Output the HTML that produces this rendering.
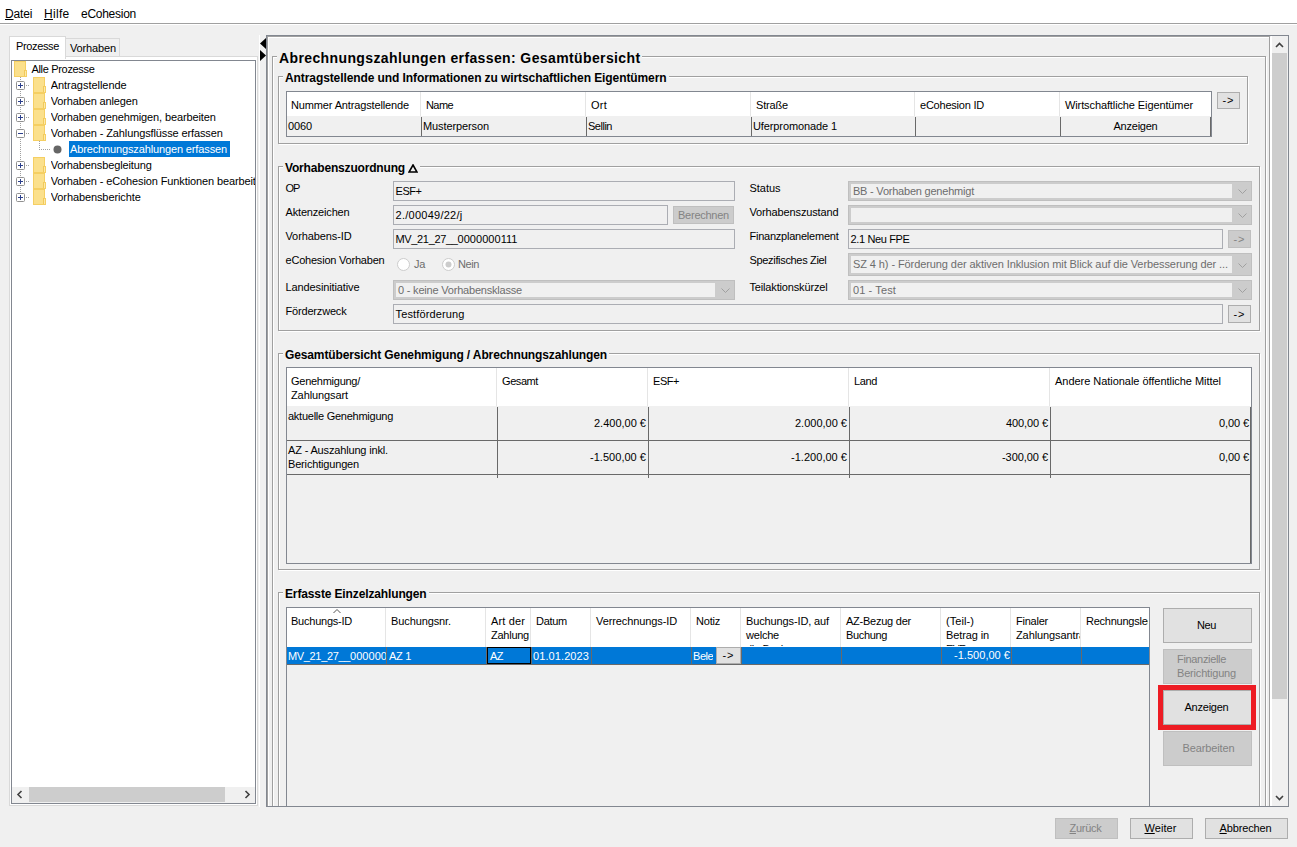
<!DOCTYPE html><html><head><meta charset="utf-8"><title>eCohesion</title><style>
*{box-sizing:border-box;margin:0;padding:0}
html,body{width:1297px;height:847px;overflow:hidden;background:#f0f0f0}
body{position:relative;font-family:"Liberation Sans",sans-serif;font-size:11px;color:#000}
.a{position:absolute;white-space:nowrap}
.t{position:absolute;white-space:nowrap;line-height:13px;height:13px}
.g{color:#6d6d6d}
.b12{font-weight:bold;font-size:12px;line-height:14px;height:14px;background:#f0f0f0;padding:0 2px}
.grp{position:absolute;border:1px solid #a0a0a0;box-shadow:1px 1px 0 #fff, inset 1px 1px 0 #fff}
.tf{position:absolute;border:1px solid #abadb3;background:#f0f0f0;height:20px;line-height:18px;padding-left:1.5px;white-space:nowrap;overflow:hidden}
.cb{position:absolute;border:1px solid #bfbfbf;box-shadow:inset 0 0 0 2px #cccccc;background:#f0f0f0;height:20px;line-height:18px;padding-left:4px;color:#6d6d6d;white-space:nowrap;overflow:hidden}
.cb i{position:absolute;right:1px;top:1px;bottom:1px;width:18px;background:#cccccc}
.cb svg{position:absolute;right:4px;top:50%;margin-top:-2px}
.btn{position:absolute;border:1px solid #adadad;background:#e1e1e1;text-align:center;white-space:nowrap}
.btn.d{background:#cccccc;border-color:#bfbfbf;color:#838383}
.fold{position:absolute;width:14px;height:16px}
.dv{width:1px;background:repeating-linear-gradient(to bottom,#a0a0a0 0 1px,transparent 1px 2px)}
.dh{height:1px;background:repeating-linear-gradient(to right,#a0a0a0 0 1px,transparent 1px 2px)}
.vl{position:absolute;width:1px;background:#696969}
.hl{position:absolute;height:1px;background:#696969}
.hv{position:absolute;width:1px;background:#e5e5e5}
</style></head><body>
<div class="a" style="left:0;top:0;width:1297px;height:23px;background:#fff"></div>
<div class="a" style="left:0;top:23px;width:1297px;height:1px;background:#a0a0a0"></div>
<div class="a" style="left:0;top:24px;width:1297px;height:1px;background:#fff"></div>
<div class="a" style="left:5px;top:7px;font-size:12px;line-height:15px;letter-spacing:-0.17px"><u>D</u>atei</div>
<div class="a" style="left:44px;top:7px;font-size:12px;line-height:15px;letter-spacing:0.3px"><u>H</u>ilfe</div>
<div class="a" style="left:81px;top:7px;font-size:12px;line-height:15px;letter-spacing:-0.27px">eCohesion</div>
<div class="a" style="left:65px;top:38px;width:55px;height:19px;background:#f0f0f0;border:1px solid #d9d9d9"></div>
<div class="a" style="left:9px;top:56px;width:249px;height:750px;border:1px solid #d9d9d9;background:#fff"></div>
<div class="a" style="left:9px;top:36px;width:57px;height:23px;background:#fff;border:1px solid #d9d9d9;border-bottom:none"></div>
<div class="t" style="left:16px;top:40px"><span style="letter-spacing:-0.357px">Prozesse</span></div>
<div class="t" style="left:70px;top:42px"><span style="letter-spacing:-0.139px">Vorhaben</span></div>
<div class="a" style="left:11px;top:60px;width:245px;height:744px;border:1px solid #828790;background:#fff"></div>
<div class="a dv" style="left:20px;top:77px;height:117px"></div>
<svg class="fold" style="left:14px;top:61px" viewBox="0 0 14 16"><path d="M0 0h12v9h1v7H0z" fill="#f5cf63"/><path d="M1 1h10v14H1z" fill="#fbe08c"/><path d="M11 10h1v5h-1z" fill="#fce9a8"/><path d="M10 9h1v6h-1z" fill="#f2c95a"/></svg>
<div class="t" style="left:31.5px;top:63px"><span style="letter-spacing:-0.328px">Alle Prozesse</span></div>
<div class="a dh" style="left:26px;top:85px;width:3px"></div>
<svg class="a" style="left:16px;top:81px" width="9" height="9" viewBox="0 0 9 9"><rect x="0.5" y="0.5" width="8" height="8" rx="1" fill="#fff" stroke="#919191"/><path d="M2 4.5h5M4.5 2v5" stroke="#2b3f8c" stroke-width="1"/></svg>
<svg class="fold" style="left:33px;top:77px" viewBox="0 0 14 16"><path d="M0 0h12v9h1v7H0z" fill="#f5cf63"/><path d="M1 1h10v14H1z" fill="#fbe08c"/><path d="M11 10h1v5h-1z" fill="#fce9a8"/><path d="M10 9h1v6h-1z" fill="#f2c95a"/></svg>
<div class="t" style="left:50.7px;top:79px;max-width:204.3px;overflow:hidden"><span style="letter-spacing:-0.03px">Antragstellende</span></div>
<div class="a dh" style="left:26px;top:101px;width:3px"></div>
<svg class="a" style="left:16px;top:97px" width="9" height="9" viewBox="0 0 9 9"><rect x="0.5" y="0.5" width="8" height="8" rx="1" fill="#fff" stroke="#919191"/><path d="M2 4.5h5M4.5 2v5" stroke="#2b3f8c" stroke-width="1"/></svg>
<svg class="fold" style="left:33px;top:93px" viewBox="0 0 14 16"><path d="M0 0h12v9h1v7H0z" fill="#f5cf63"/><path d="M1 1h10v14H1z" fill="#fbe08c"/><path d="M11 10h1v5h-1z" fill="#fce9a8"/><path d="M10 9h1v6h-1z" fill="#f2c95a"/></svg>
<div class="t" style="left:50.7px;top:95px;max-width:204.3px;overflow:hidden"><span style="letter-spacing:-0.145px">Vorhaben anlegen</span></div>
<div class="a dh" style="left:26px;top:117px;width:3px"></div>
<svg class="a" style="left:16px;top:113px" width="9" height="9" viewBox="0 0 9 9"><rect x="0.5" y="0.5" width="8" height="8" rx="1" fill="#fff" stroke="#919191"/><path d="M2 4.5h5M4.5 2v5" stroke="#2b3f8c" stroke-width="1"/></svg>
<svg class="fold" style="left:33px;top:109px" viewBox="0 0 14 16"><path d="M0 0h12v9h1v7H0z" fill="#f5cf63"/><path d="M1 1h10v14H1z" fill="#fbe08c"/><path d="M11 10h1v5h-1z" fill="#fce9a8"/><path d="M10 9h1v6h-1z" fill="#f2c95a"/></svg>
<div class="t" style="left:50.7px;top:111px;max-width:204.3px;overflow:hidden"><span style="letter-spacing:-0.123px">Vorhaben genehmigen, bearbeiten</span></div>
<div class="a dh" style="left:26px;top:133px;width:3px"></div>
<svg class="a" style="left:16px;top:129px" width="9" height="9" viewBox="0 0 9 9"><rect x="0.5" y="0.5" width="8" height="8" rx="1" fill="#fff" stroke="#919191"/><path d="M2 4.5h5" stroke="#2b3f8c" stroke-width="1"/></svg>
<svg class="fold" style="left:33px;top:125px" viewBox="0 0 14 16"><path d="M0 0h12v9h1v7H0z" fill="#f5cf63"/><path d="M1 1h10v14H1z" fill="#fbe08c"/><path d="M11 10h1v5h-1z" fill="#fce9a8"/><path d="M10 9h1v6h-1z" fill="#f2c95a"/></svg>
<div class="t" style="left:50.7px;top:127px;max-width:204.3px;overflow:hidden"><span style="letter-spacing:-0.121px">Vorhaben - Zahlungsflüsse erfassen</span></div>
<div class="a dv" style="left:39px;top:141px;height:9px"></div>
<div class="a dh" style="left:41px;top:149px;width:9px"></div>
<svg class="a" style="left:53px;top:145px" width="9" height="9" viewBox="0 0 9 9"><circle cx="4.5" cy="4.5" r="4" fill="#666"/></svg>
<div class="a" style="left:69px;top:141px;width:161px;height:16px;background:#0078d7"></div>
<div class="t" style="left:70px;top:143px;color:#fff"><span style="letter-spacing:-0.133px">Abrechnungszahlungen erfassen</span></div>
<div class="a dh" style="left:26px;top:165px;width:3px"></div>
<svg class="a" style="left:16px;top:161px" width="9" height="9" viewBox="0 0 9 9"><rect x="0.5" y="0.5" width="8" height="8" rx="1" fill="#fff" stroke="#919191"/><path d="M2 4.5h5M4.5 2v5" stroke="#2b3f8c" stroke-width="1"/></svg>
<svg class="fold" style="left:33px;top:157px" viewBox="0 0 14 16"><path d="M0 0h12v9h1v7H0z" fill="#f5cf63"/><path d="M1 1h10v14H1z" fill="#fbe08c"/><path d="M11 10h1v5h-1z" fill="#fce9a8"/><path d="M10 9h1v6h-1z" fill="#f2c95a"/></svg>
<div class="t" style="left:50.7px;top:159px;max-width:204.3px;overflow:hidden"><span style="letter-spacing:-0.125px">Vorhabensbegleitung</span></div>
<div class="a dh" style="left:26px;top:181px;width:3px"></div>
<svg class="a" style="left:16px;top:177px" width="9" height="9" viewBox="0 0 9 9"><rect x="0.5" y="0.5" width="8" height="8" rx="1" fill="#fff" stroke="#919191"/><path d="M2 4.5h5M4.5 2v5" stroke="#2b3f8c" stroke-width="1"/></svg>
<svg class="fold" style="left:33px;top:173px" viewBox="0 0 14 16"><path d="M0 0h12v9h1v7H0z" fill="#f5cf63"/><path d="M1 1h10v14H1z" fill="#fbe08c"/><path d="M11 10h1v5h-1z" fill="#fce9a8"/><path d="M10 9h1v6h-1z" fill="#f2c95a"/></svg>
<div class="t" style="left:50.7px;top:175px;max-width:204.3px;overflow:hidden"><span style="letter-spacing:-0.119px">Vorhaben - eCohesion Funktionen bearbeit</span></div>
<div class="a dh" style="left:26px;top:197px;width:3px"></div>
<svg class="a" style="left:16px;top:193px" width="9" height="9" viewBox="0 0 9 9"><rect x="0.5" y="0.5" width="8" height="8" rx="1" fill="#fff" stroke="#919191"/><path d="M2 4.5h5M4.5 2v5" stroke="#2b3f8c" stroke-width="1"/></svg>
<svg class="fold" style="left:33px;top:189px" viewBox="0 0 14 16"><path d="M0 0h12v9h1v7H0z" fill="#f5cf63"/><path d="M1 1h10v14H1z" fill="#fbe08c"/><path d="M11 10h1v5h-1z" fill="#fce9a8"/><path d="M10 9h1v6h-1z" fill="#f2c95a"/></svg>
<div class="t" style="left:50.7px;top:191px;max-width:204.3px;overflow:hidden"><span style="letter-spacing:-0.102px">Vorhabensberichte</span></div>
<div class="a" style="left:12px;top:787px;width:243px;height:16px;background:#f0f0f0"></div>
<div class="a" style="left:29px;top:787px;width:196px;height:15px;background:#cdcdcd"></div>
<svg class="a" style="left:16px;top:790px" width="8" height="9" viewBox="0 0 8 9"><path d="M5.5 1L2 4.5L5.5 8" fill="none" stroke="#404040" stroke-width="1.6"/></svg>
<svg class="a" style="left:243px;top:790px" width="8" height="9" viewBox="0 0 8 9"><path d="M2.5 1L6 4.5L2.5 8" fill="none" stroke="#404040" stroke-width="1.6"/></svg>
<div class="a" style="left:259px;top:35px;width:1px;height:772px;background:#fff"></div>
<svg class="a" style="left:260px;top:38px" width="6" height="23" viewBox="0 0 6 23"><path d="M6 0v11L0 5.5zM0 12l6 5.5L0 23z" fill="#000"/></svg>
<div class="a" style="left:266px;top:35px;width:1023px;height:772px;border:1px solid #828790"></div>
<div class="a" style="left:267px;top:36px;width:1004px;height:770px;overflow:hidden"><div class="a" style="left:-267px;top:-36px;width:1297px;height:900px">
<div class="grp" style="left:267px;top:36px;width:1003px;height:800px"></div>
<div class="grp" style="left:272px;top:56px;width:994px;height:800px"></div>
<div class="a" style="left:277px;top:50px;font-weight:bold;font-size:14px;line-height:16px;background:#f0f0f0;padding:0 2px"><span style="letter-spacing:0.383px">Abrechnungszahlungen erfassen: Gesamtübersicht</span></div>
<div class="grp" style="left:278px;top:76px;width:970px;height:68px"></div>
<div class="a b12" style="left:283px;top:71px"><span style="letter-spacing:-0.09px">Antragstellende und Informationen zu wirtschaftlichen Eigentümern</span></div>
<div class="a" style="left:286px;top:91px;width:926px;height:46px;border:1px solid #828790"></div>
<div class="a" style="left:287px;top:92px;width:924px;height:24px;background:#fff"></div>
<div class="vl" style="left:1210px;top:117px;height:19px"></div>
<div class="t" style="left:291px;top:99px"><span style="letter-spacing:-0.139px">Nummer Antragstellende</span></div>
<div class="t" style="left:288px;top:120px"><span style="letter-spacing:-0.121px">0060</span></div>
<div class="t" style="left:426px;top:99px"><span style="letter-spacing:-0.586px">Name</span></div>
<div class="t" style="left:423px;top:120px"><span style="letter-spacing:-0.105px">Musterperson</span></div>
<div class="hv" style="left:420px;top:92px;height:24px"></div>
<div class="vl" style="left:421px;top:117px;height:19px"></div>
<div class="t" style="left:591px;top:99px"><span style="letter-spacing:0.24px">Ort</span></div>
<div class="t" style="left:588px;top:120px"><span style="letter-spacing:-0.484px">Sellin</span></div>
<div class="hv" style="left:585px;top:92px;height:24px"></div>
<div class="vl" style="left:586px;top:117px;height:19px"></div>
<div class="t" style="left:756px;top:99px"><span style="letter-spacing:-0.169px">Straße</span></div>
<div class="t" style="left:753px;top:120px"><span style="letter-spacing:-0.107px">Uferpromonade 1</span></div>
<div class="hv" style="left:750px;top:92px;height:24px"></div>
<div class="vl" style="left:751px;top:117px;height:19px"></div>
<div class="t" style="left:920px;top:99px"><span style="letter-spacing:-0.221px">eCohesion ID</span></div>
<div class="hv" style="left:914px;top:92px;height:24px"></div>
<div class="vl" style="left:915px;top:117px;height:19px"></div>
<div class="t" style="left:1065px;top:99px"><span style="letter-spacing:-0.109px">Wirtschaftliche Eigentümer</span></div>
<div class="hv" style="left:1059px;top:92px;height:24px"></div>
<div class="vl" style="left:1060px;top:117px;height:19px"></div>
<div class="t" style="left:1061px;top:120px;width:149px;text-align:center"><span style="letter-spacing:-0.234px">Anzeigen</span></div>
<div class="btn" style="left:1217px;top:92px;width:23px;height:17px;line-height:15px"><span style="letter-spacing:0.953px">-&gt;</span></div>
<div class="grp" style="left:278px;top:166px;width:982px;height:165px"></div>
<div class="a b12" style="left:283px;top:161px"><span style="letter-spacing:-0.173px">Vorhabenszuordnung</span> <svg width="10" height="9" viewBox="0 0 10 9" style="vertical-align:-0.5px"><path d="M5 1L9 8H1z" fill="none" stroke="#000" stroke-width="1.6"/></svg></div>
<div class="t" style="left:285.5px;top:182px"><span style="letter-spacing:-0.953px">OP</span></div>
<div class="t" style="left:285.5px;top:206px"><span style="letter-spacing:-0.171px">Aktenzeichen</span></div>
<div class="t" style="left:285.5px;top:230px"><span style="letter-spacing:-0.105px">Vorhabens-ID</span></div>
<div class="t" style="left:285.5px;top:254px"><span style="letter-spacing:-0.208px">eCohesion Vorhaben</span></div>
<div class="t" style="left:285.5px;top:281px"><span style="letter-spacing:-0.115px">Landesinitiative</span></div>
<div class="t" style="left:285.5px;top:305px"><span style="letter-spacing:-0.179px">Förderzweck</span></div>
<div class="tf" style="left:393px;top:181px;width:342px"><span style="letter-spacing:-0.457px">ESF+</span></div>
<div class="tf" style="left:393px;top:205px;width:275px"><span style="letter-spacing:0.26px">2./00049/22/j</span></div>
<div class="btn d" style="left:673px;top:206px;width:61px;height:18px;line-height:16px"><span style="letter-spacing:-0.247px">Berechnen</span></div>
<div class="tf" style="left:393px;top:229px;width:342px"><span style="letter-spacing:-0.345px">MV_21_27__</span><span style="letter-spacing:0.045px">0000000111</span></div>
<svg class="a" style="left:397px;top:258px" width="13" height="13" viewBox="0 0 13 13"><circle cx="6.5" cy="6.5" r="6" fill="#fff" stroke="#cccccc"/></svg>
<div class="t g" style="left:414px;top:258px"><span style="letter-spacing:-0.312px">Ja</span></div>
<svg class="a" style="left:442px;top:258px" width="13" height="13" viewBox="0 0 13 13"><circle cx="6.5" cy="6.5" r="6" fill="#fff" stroke="#cccccc"/><circle cx="6.5" cy="6.5" r="3" fill="#cccccc"/></svg>
<div class="t g" style="left:458px;top:258px"><span style="letter-spacing:-0.406px">Nein</span></div>
<div class="cb" style="left:393px;top:280px;width:342px;height:20px;line-height:18px"><span style="letter-spacing:-0.201px">0 - keine Vorhabensklasse</span><i></i><svg width="9" height="6" viewBox="0 0 9 6"><path d="M0.5 0.5L4.5 4.5L8.5 0.5" fill="none" stroke="#a0a0a0" stroke-width="1"/></svg></div>
<div class="tf" style="left:393px;top:304px;width:830px"><span style="letter-spacing:0.133px">Testförderung</span></div>
<div class="btn" style="left:1228px;top:305px;width:23px;height:18px;line-height:17px"><span style="letter-spacing:0.953px">-&gt;</span></div>
<div class="t" style="left:749.5px;top:182px"><span style="letter-spacing:-0.031px">Status</span></div>
<div class="t" style="left:749.5px;top:206px"><span style="letter-spacing:-0.134px">Vorhabenszustand</span></div>
<div class="t" style="left:749.5px;top:230px"><span style="letter-spacing:-0.233px">Finanzplanelement</span></div>
<div class="t" style="left:749.5px;top:254px"><span style="letter-spacing:-0.326px">Spezifisches Ziel</span></div>
<div class="t" style="left:749.5px;top:281px"><span style="letter-spacing:-0.159px">Teilaktionskürzel</span></div>
<div class="cb" style="left:848px;top:181px;width:404px;height:20px;line-height:18px"><span style="letter-spacing:-0.217px">BB - Vorhaben genehmigt</span><i></i><svg width="9" height="6" viewBox="0 0 9 6"><path d="M0.5 0.5L4.5 4.5L8.5 0.5" fill="none" stroke="#a0a0a0" stroke-width="1"/></svg></div>
<div class="cb" style="left:848px;top:205px;width:404px;height:20px;line-height:18px"><i></i><svg width="9" height="6" viewBox="0 0 9 6"><path d="M0.5 0.5L4.5 4.5L8.5 0.5" fill="none" stroke="#a0a0a0" stroke-width="1"/></svg></div>
<div class="tf" style="left:848px;top:229px;width:375px"><span style="letter-spacing:-0.362px">2.1 Neu FPE</span></div>
<div class="btn d" style="left:1228px;top:230px;width:23px;height:18px;line-height:17px"><span style="letter-spacing:0.953px">-&gt;</span></div>
<div class="cb" style="left:848px;top:253px;width:404px;height:23px;line-height:21px"><span style="letter-spacing:-0.089px">SZ 4 h) - Förderung der aktiven Inklusion mit Blick auf die Verbesserung der ...</span><i></i><svg width="9" height="6" viewBox="0 0 9 6"><path d="M0.5 0.5L4.5 4.5L8.5 0.5" fill="none" stroke="#a0a0a0" stroke-width="1"/></svg></div>
<div class="cb" style="left:848px;top:280px;width:404px;height:20px;line-height:18px"><span style="letter-spacing:0.111px">01 - Test</span><i></i><svg width="9" height="6" viewBox="0 0 9 6"><path d="M0.5 0.5L4.5 4.5L8.5 0.5" fill="none" stroke="#a0a0a0" stroke-width="1"/></svg></div>
<div class="grp" style="left:278px;top:353px;width:982px;height:217px"></div>
<div class="a b12" style="left:283px;top:348px"><span style="letter-spacing:-0.125px">Gesamtübersicht Genehmigung / Abrechnungszahlungen</span></div>
<div class="a" style="left:286px;top:367px;width:966px;height:197px;border:1px solid #828790"></div>
<div class="a" style="left:287px;top:368px;width:964px;height:38px;background:#fff"></div>
<div class="vl" style="left:1250px;top:407px;height:156px"></div>
<div class="a" style="left:291px;top:374px;line-height:14px"><span style="letter-spacing:-0.264px">Genehmigung/</span><br><span style="letter-spacing:-0.099px">Zahlungsart</span></div>
<div class="a" style="left:502px;top:374px;line-height:14px"><span style="letter-spacing:-0.419px">Gesamt</span></div>
<div class="hv" style="left:496px;top:368px;height:38px"></div>
<div class="vl" style="left:497px;top:407px;height:71px"></div>
<div class="a" style="left:653px;top:374px;line-height:14px"><span style="letter-spacing:-0.457px">ESF+</span></div>
<div class="hv" style="left:647px;top:368px;height:38px"></div>
<div class="vl" style="left:648px;top:407px;height:71px"></div>
<div class="a" style="left:854px;top:374px;line-height:14px"><span style="letter-spacing:-0.371px">Land</span></div>
<div class="hv" style="left:848px;top:368px;height:38px"></div>
<div class="vl" style="left:849px;top:407px;height:71px"></div>
<div class="a" style="left:1055px;top:374px;line-height:14px"><span style="letter-spacing:-0.038px">Andere Nationale öffentliche Mittel</span></div>
<div class="hv" style="left:1049px;top:368px;height:38px"></div>
<div class="vl" style="left:1050px;top:407px;height:71px"></div>
<div class="hl" style="left:287px;top:440px;width:963px"></div>
<div class="hl" style="left:287px;top:474px;width:963px"></div>
<div class="t" style="left:288px;top:410px"><span style="letter-spacing:-0.254px">aktuelle Genehmigung</span></div>
<div class="a" style="left:288px;top:443px;line-height:14px"><span style="letter-spacing:-0.159px">AZ - Auszahlung inkl.</span><br><span style="letter-spacing:-0.171px">Berichtigungen</span></div>
<div class="t" style="right:651px;top:417px"><span style="letter-spacing:0.0px">2.400,00 €</span></div>
<div class="t" style="right:450px;top:417px"><span style="letter-spacing:0.0px">2.000,00 €</span></div>
<div class="t" style="right:249px;top:417px"><span style="letter-spacing:-0.104px">400,00 €</span></div>
<div class="t" style="right:48px;top:417px"><span style="letter-spacing:-0.099px">0,00 €</span></div>
<div class="t" style="right:651px;top:451px"><span style="letter-spacing:0.031px">-1.500,00 €</span></div>
<div class="t" style="right:450px;top:451px"><span style="letter-spacing:0.031px">-1.200,00 €</span></div>
<div class="t" style="right:249px;top:451px"><span style="letter-spacing:-0.054px">-300,00 €</span></div>
<div class="t" style="right:48px;top:451px"><span style="letter-spacing:-0.099px">0,00 €</span></div>
<div class="grp" style="left:278px;top:592px;width:982px;height:300px"></div>
<div class="a b12" style="left:283px;top:587px"><span style="letter-spacing:-0.133px">Erfasste Einzelzahlungen</span></div>
<div class="a" style="left:286px;top:607px;width:864px;height:300px;border:1px solid #828790"></div>
<div class="a" style="left:287px;top:608px;width:862px;height:39px;background:#fff"></div>
<div class="a" style="left:287px;top:647px;width:862px;height:17px;background:#0078d7"></div>
<div class="a" style="left:287px;top:608px;width:98px;height:38px;overflow:hidden"><div class="a" style="left:4px;top:6px;line-height:14px"><span style="letter-spacing:-0.236px">Buchungs-ID</span></div></div>
<div class="hv" style="left:385px;top:608px;height:39px"></div>
<div class="a" style="left:386px;top:647px;width:1px;height:17px;background:#696969"></div>
<div class="a" style="left:386px;top:608px;width:99px;height:38px;overflow:hidden"><div class="a" style="left:5px;top:6px;line-height:14px"><span style="letter-spacing:-0.105px">Buchungsnr.</span></div></div>
<div class="hv" style="left:485px;top:608px;height:39px"></div>
<div class="a" style="left:486px;top:647px;width:1px;height:17px;background:#696969"></div>
<div class="a" style="left:486px;top:608px;width:44px;height:38px;overflow:hidden"><div class="a" style="left:5px;top:6px;line-height:14px"><span style="letter-spacing:0.141px">Art der</span><br><span style="letter-spacing:-0.252px">Zahlung</span></div></div>
<div class="hv" style="left:530px;top:608px;height:39px"></div>
<div class="a" style="left:531px;top:647px;width:1px;height:17px;background:#696969"></div>
<div class="a" style="left:531px;top:608px;width:59px;height:38px;overflow:hidden"><div class="a" style="left:5px;top:6px;line-height:14px"><span style="letter-spacing:-0.281px">Datum</span></div></div>
<div class="hv" style="left:590px;top:608px;height:39px"></div>
<div class="a" style="left:591px;top:647px;width:1px;height:17px;background:#696969"></div>
<div class="a" style="left:591px;top:608px;width:99px;height:38px;overflow:hidden"><div class="a" style="left:5px;top:6px;line-height:14px"><span style="letter-spacing:-0.103px">Verrechnungs-ID</span></div></div>
<div class="hv" style="left:690px;top:608px;height:39px"></div>
<div class="a" style="left:691px;top:647px;width:1px;height:17px;background:#696969"></div>
<div class="a" style="left:691px;top:608px;width:49px;height:38px;overflow:hidden"><div class="a" style="left:5px;top:6px;line-height:14px"><span style="letter-spacing:-0.212px">Notiz</span></div></div>
<div class="hv" style="left:740px;top:608px;height:39px"></div>
<div class="a" style="left:741px;top:647px;width:1px;height:17px;background:#696969"></div>
<div class="a" style="left:741px;top:608px;width:99px;height:38px;overflow:hidden"><div class="a" style="left:5px;top:6px;line-height:14px"><span style="letter-spacing:-0.125px">Buchungs-ID, auf</span><br><span style="letter-spacing:-0.208px">welche</span><br><span style="letter-spacing:-0.288px">die Buchung</span></div></div>
<div class="hv" style="left:840px;top:608px;height:39px"></div>
<div class="a" style="left:841px;top:647px;width:1px;height:17px;background:#696969"></div>
<div class="a" style="left:841px;top:608px;width:99px;height:38px;overflow:hidden"><div class="a" style="left:5px;top:6px;line-height:14px"><span style="letter-spacing:-0.24px">AZ-Bezug der</span><br><span style="letter-spacing:-0.348px">Buchung</span></div></div>
<div class="hv" style="left:940px;top:608px;height:39px"></div>
<div class="a" style="left:941px;top:647px;width:1px;height:17px;background:#696969"></div>
<div class="a" style="left:941px;top:608px;width:69px;height:38px;overflow:hidden"><div class="a" style="left:5px;top:6px;line-height:14px"><span style="letter-spacing:0.071px">(Teil-)</span><br><span style="letter-spacing:-0.115px">Betrag in</span><br><span style="letter-spacing:-1.078px">EUR</span></div></div>
<div class="hv" style="left:1010px;top:608px;height:39px"></div>
<div class="a" style="left:1011px;top:647px;width:1px;height:17px;background:#696969"></div>
<div class="a" style="left:1011px;top:608px;width:69px;height:38px;overflow:hidden"><div class="a" style="left:5px;top:6px;line-height:14px"><span style="letter-spacing:-0.232px">Finaler</span><br><span style="letter-spacing:-0.104px">Zahlungsantrag</span></div></div>
<div class="hv" style="left:1080px;top:608px;height:39px"></div>
<div class="a" style="left:1081px;top:647px;width:1px;height:17px;background:#696969"></div>
<div class="a" style="left:1081px;top:608px;width:67px;height:38px;overflow:hidden"><div class="a" style="left:5px;top:6px;line-height:14px"><span style="letter-spacing:-0.246px">Rechnungslegung</span></div></div>
<div class="hl" style="left:287px;top:664px;width:862px"></div>
<svg class="a" style="left:333px;top:609px" width="8" height="5" viewBox="0 0 8 5"><path d="M0.5 4L4 0.5L7.5 4" fill="none" stroke="#555" stroke-width="1"/></svg>
<div class="a" style="left:288px;top:649px;width:98px;height:14px;line-height:14px;color:#fff;overflow:hidden"><span style="letter-spacing:-0.345px">MV_21_27__</span><span style="letter-spacing:0.045px">0000000111</span></div>
<div class="a" style="left:389px;top:649px;width:97px;height:14px;line-height:14px;color:#fff;overflow:hidden"><span style="letter-spacing:-0.309px">AZ 1</span></div>
<div class="a" style="left:533px;top:649px;width:58px;height:14px;line-height:14px;color:#fff;overflow:hidden"><span style="letter-spacing:0.094px">01.01.2023</span></div>
<div class="a" style="left:693px;top:649px;width:20px;height:14px;line-height:14px;color:#fff;overflow:hidden"><span style="letter-spacing:-0.428px">Beleg</span></div>
<div class="a" style="left:487px;top:647px;width:44px;height:17px;border:1px solid #000;color:#fff;line-height:17px;padding-left:2px"><span style="letter-spacing:-0.531px">AZ</span></div>
<div class="btn" style="left:716px;top:647px;width:25px;height:17px;line-height:15px"><span style="letter-spacing:0.953px">-&gt;</span></div>
<div class="t" style="right:287px;top:649px;color:#fff"><span style="letter-spacing:0.031px">-1.500,00 €</span></div>
<div class="btn" style="left:1163px;top:608px;width:89px;height:35px;line-height:33px;padding-right:2px"><span style="letter-spacing:-0.396px">Neu</span></div>
<div class="btn d" style="left:1163px;top:649px;width:89px;height:35px;line-height:14px;padding-top:2px;padding-right:2px"><span style="display:inline-block;text-align:left"><span style="letter-spacing:-0.327px">Finanzielle</span><br><span style="letter-spacing:-0.18px">Berichtigung</span></span></div>
<div class="btn" style="left:1163px;top:690px;width:89px;height:35px;line-height:33px;padding-right:2px"><span style="letter-spacing:-0.234px">Anzeigen</span></div>
<div class="btn d" style="left:1163px;top:731px;width:89px;height:35px;line-height:33px;padding-left:2px"><span style="letter-spacing:-0.122px">Bearbeiten</span></div>
<div class="a" style="left:1158px;top:685px;width:98px;height:45px;border:5px solid #ed1c24"></div>
</div></div>
<div class="a" style="left:1271px;top:36px;width:17px;height:770px;background:#f0f0f0;border-left:1px solid #fff"></div>
<div class="a" style="left:1272px;top:53px;width:15px;height:646px;background:#cdcdcd"></div>
<svg class="a" style="left:1275px;top:42px" width="9" height="6" viewBox="0 0 9 6"><path d="M1 5L4.5 1.5L8 5" fill="none" stroke="#404040" stroke-width="1.6"/></svg>
<svg class="a" style="left:1275px;top:795px" width="9" height="6" viewBox="0 0 9 6"><path d="M1 1L4.5 4.5L8 1" fill="none" stroke="#404040" stroke-width="1.6"/></svg>
<div class="btn d" style="left:1055px;top:818px;width:63px;height:21px;line-height:18px;padding-right:2px"><span style="letter-spacing:-0.271px"><u>Z</u>urück</span></div>
<div class="btn" style="left:1130px;top:818px;width:63px;height:21px;line-height:18px;padding-right:2px"><span style="letter-spacing:0.068px"><u>W</u>eiter</span></div>
<div class="btn" style="left:1205px;top:818px;width:83px;height:21px;line-height:18px;padding-right:2px"><span style="letter-spacing:-0.135px"><u>A</u>bbrechen</span></div>
</body></html>
